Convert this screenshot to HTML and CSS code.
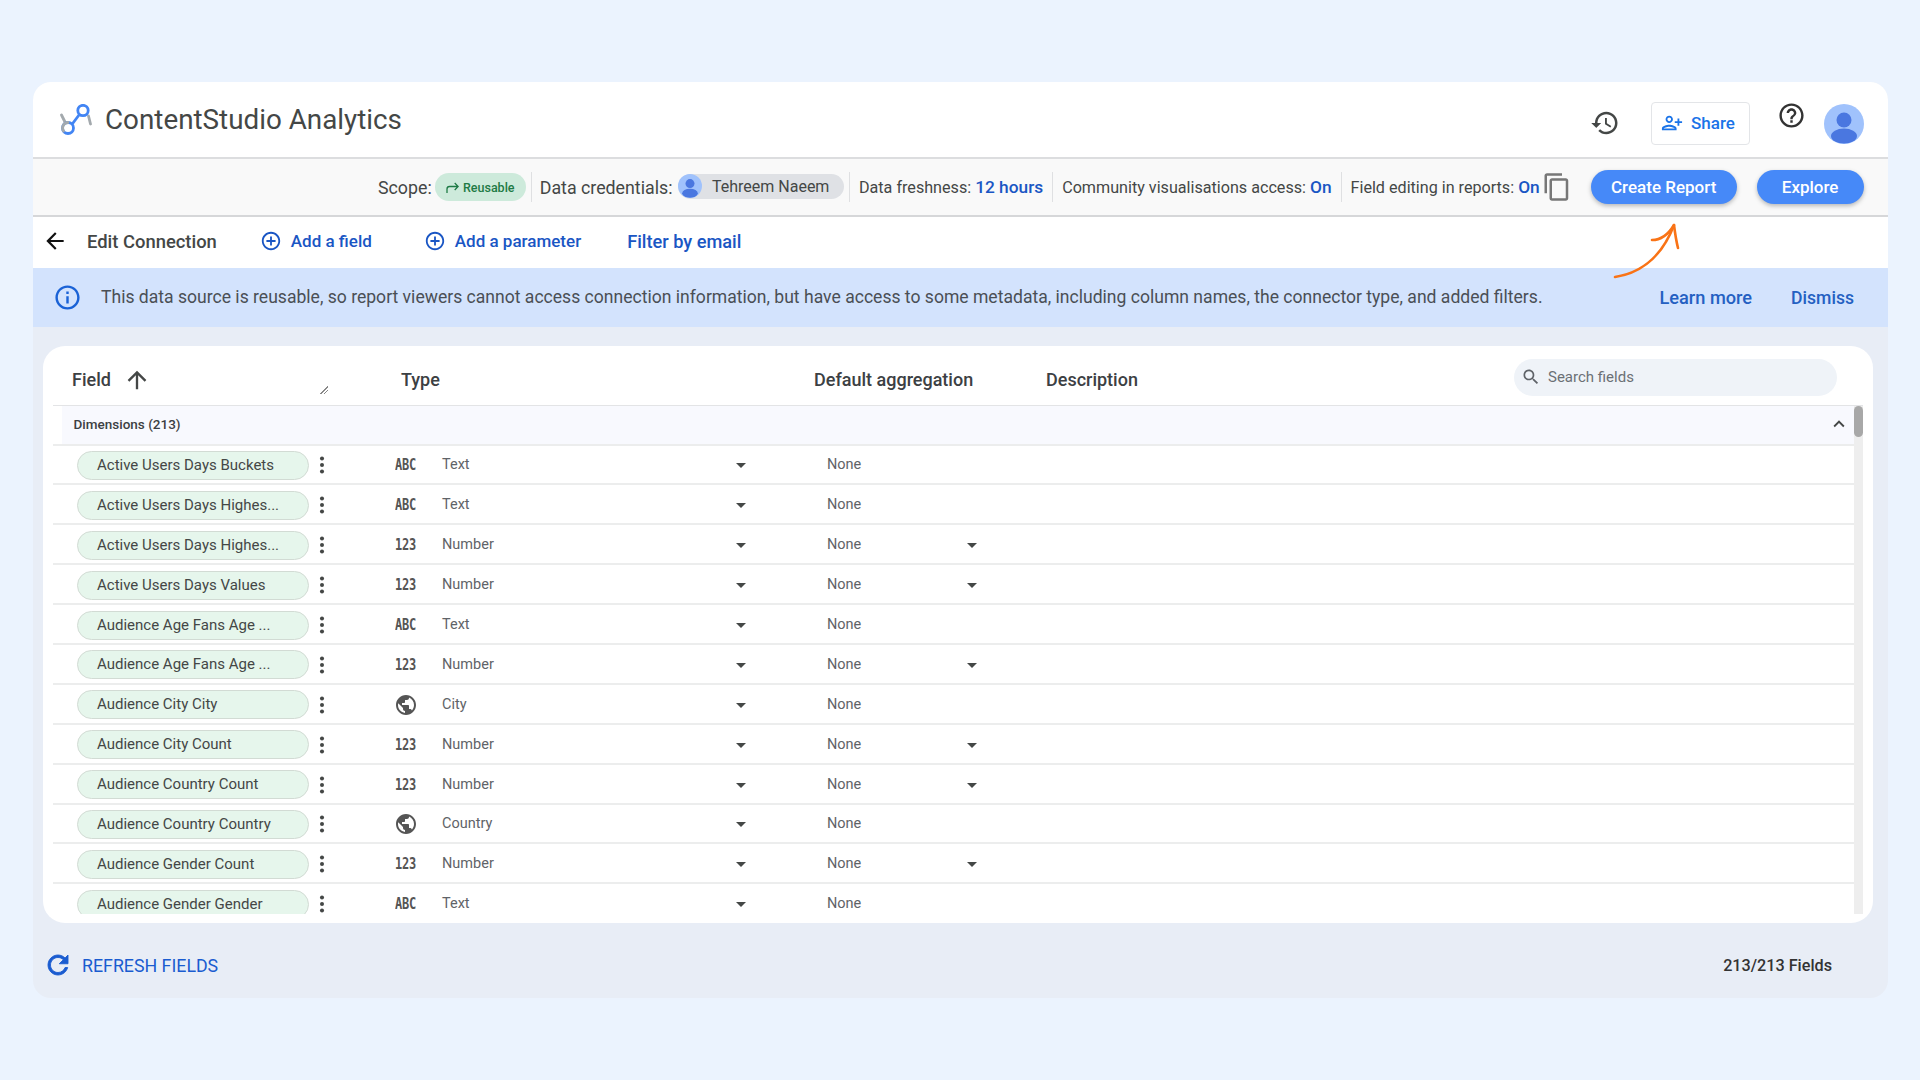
FILE: index.html
```html
<!DOCTYPE html>
<html lang="en">
<head>
  <meta charset="UTF-8">
  <title>ContentStudio Analytics</title>
  <link rel="stylesheet" href="styles.css">
</head>
<body>
  <svg class="sprite" xmlns="http://www.w3.org/2000/svg">
    <symbol id="i-history" viewBox="0 0 24 24"><path d="M13 3c-4.97 0-9 4.03-9 9H1l3.89 3.89.07.14L9 12H6c0-3.87 3.13-7 7-7s7 3.13 7 7-3.13 7-7 7c-1.93 0-3.68-.79-4.94-2.06l-1.42 1.42C8.27 19.99 10.51 21 13 21c4.97 0 9-4.03 9-9s-4.03-9-9-9zm-1 5v5l4.28 2.54.72-1.21-3.5-2.08V8H12z"/></symbol>
    <symbol id="i-help" viewBox="0 0 24 24"><path d="M11 18h2v-2h-2v2zm1-16C6.48 2 2 6.48 2 12s4.48 10 10 10 10-4.48 10-10S17.52 2 12 2zm0 18c-4.41 0-8-3.59-8-8s3.59-8 8-8 8 3.59 8 8-3.59 8-8 8zm0-14c-2.21 0-4 1.79-4 4h2c0-1.1.9-2 2-2s2 .9 2 2c0 2-3 1.75-3 5h2c0-2.25 3-2.5 3-5 0-2.21-1.79-4-4-4z"/></symbol>
    <symbol id="i-share" viewBox="0 0 24 24"><path transform="translate(24 0) scale(-1 1)" d="M15 12c2.21 0 4-1.79 4-4s-1.79-4-4-4-4 1.79-4 4 1.79 4 4 4zm0-6c1.1 0 2 .9 2 2s-.9 2-2 2-2-.9-2-2 .9-2 2-2zm0 8c-2.67 0-8 1.34-8 4v2h16v-2c0-2.66-5.33-4-8-4zm-6 4c.22-.72 3.31-2 6-2 2.7 0 5.8 1.29 6 2H9zm-3-3v-3h3v-2H6V7H4v3H1v2h3v3h2z"/></symbol>
    <symbol id="i-copy" viewBox="0 0 24 24"><path d="M16 1H4c-1.1 0-2 .9-2 2v14h2V3h12V1zm3 4H8c-1.1 0-2 .9-2 2v14c0 1.1.9 2 2 2h11c1.1 0 2-.9 2-2V7c0-1.1-.9-2-2-2zm0 16H8V7h11v14z"/></symbol>
    <symbol id="i-back" viewBox="0 0 24 24"><path d="M20 11H7.83l5.59-5.59L12 4l-8 8 8 8 1.41-1.41L7.83 13H20v-2z"/></symbol>
    <symbol id="i-up" viewBox="0 0 24 24"><path d="M4 12l1.41 1.41L11 7.83V20h2V7.83l5.58 5.59L20 12l-8-8-8 8z"/></symbol>
    <symbol id="i-add" viewBox="0 0 24 24"><path d="M13 7h-2v4H7v2h4v4h2v-4h4v-2h-4V7zm-1-5C6.48 2 2 6.48 2 12s4.48 10 10 10 10-4.48 10-10S17.52 2 12 2zm0 18c-4.41 0-8-3.59-8-8s3.59-8 8-8 8 3.59 8 8-3.59 8-8 8z"/></symbol>
    <symbol id="i-info" viewBox="0 0 24 24"><path d="M11 7h2v2h-2zm0 4h2v6h-2zm1-9C6.48 2 2 6.48 2 12s4.48 10 10 10 10-4.48 10-10S17.52 2 12 2zm0 18c-4.41 0-8-3.59-8-8s3.59-8 8-8 8 3.59 8 8-3.59 8-8 8z"/></symbol>
    <symbol id="i-search" viewBox="0 0 24 24"><path d="M15.5 14h-.79l-.28-.27C15.41 12.59 16 11.11 16 9.5 16 5.91 13.09 3 9.5 3S3 5.91 3 9.5 5.91 16 9.5 16c1.61 0 3.09-.59 4.23-1.57l.27.28v.79l5 4.99L20.49 19l-4.99-5zm-6 0C7.01 14 5 11.99 5 9.5S7.01 5 9.5 5 14 7.01 14 9.5 11.99 14 9.5 14z"/></symbol>
    <symbol id="i-less" viewBox="0 0 24 24"><path d="M12 8l-6 6 1.41 1.41L12 10.83l4.59 4.58L18 14z"/></symbol>
    <symbol id="i-kebab" viewBox="0 0 24 24"><circle cx="12" cy="5" r="2.2"/><circle cx="12" cy="12" r="2.2"/><circle cx="12" cy="19" r="2.2"/></symbol>
    <symbol id="i-drop" viewBox="0 0 24 24"><path d="M7 10l5 5 5-5z"/></symbol>
    <symbol id="i-globe" viewBox="0 0 24 24"><path d="M12 2C6.48 2 2 6.48 2 12s4.48 10 10 10 10-4.48 10-10S17.52 2 12 2zm-1 17.93c-3.95-.49-7-3.85-7-7.93 0-.62.08-1.21.21-1.79L9 15v1c0 1.1.9 2 2 2v1.93zm6.9-2.54c-.26-.81-1-1.39-1.9-1.39h-1v-3c0-.55-.45-1-1-1H8v-2h2c.55 0 1-.45 1-1V7h2c1.1 0 2-.9 2-2v-.41c2.93 1.19 5 4.06 5 7.41 0 2.08-.8 3.97-2.1 5.39z"/></symbol>
    <symbol id="i-refresh" viewBox="0 0 24 24"><path stroke="#1a5cd0" stroke-width="0.7" d="M17.65 6.35C16.2 4.9 14.21 4 12 4c-4.42 0-7.99 3.58-7.99 8s3.57 8 7.99 8c3.73 0 6.84-2.55 7.73-6h-2.08c-.82 2.33-3.04 4-5.65 4-3.31 0-6-2.69-6-6s2.69-6 6-6c1.66 0 3.14.69 4.22 1.78L13 11h7V4l-2.35 2.35z"/></symbol>
    <symbol id="i-person" viewBox="0 0 40 40"><rect width="40" height="40" fill="#a0c2fc"/><circle cx="20" cy="16" r="7.5" fill="#4a77e0"/><ellipse cx="20" cy="32" rx="13" ry="7.5" fill="#4a77e0"/></symbol>
  </svg>

  <div class="app">
    <header class="topbar">
      <svg class="logo" viewBox="0 0 32 32" width="32" height="32" fill="none" stroke-width="2.8" stroke-linecap="round">
        <path d="M1.5 11l3.5 7M28.500 12l2 8" stroke="#a3a9ad"/>
        <circle cx="23" cy="6.5" r="5.2" stroke="#4285f4"/>
        <path d="M19 11l-6 8" stroke="#4285f4"/>
        <circle cx="8" cy="24" r="5.5" stroke="#4285f4"/>
        <path d="M3.5 27a5.5 5.5 0 0 1 4.5-8.500" stroke="#a3a9ad"/>
      </svg>
      <div class="title">ContentStudio Analytics</div>
      <svg class="ico-history"><use href="#i-history"/></svg>
      <button class="share-btn"><svg class="ico-share"><use href="#i-share"/></svg>Share</button>
      <svg class="ico-help"><use href="#i-help"/></svg>
      <svg class="avatar"><use href="#i-person"/></svg>
    </header>

    <div class="toolbar">
      <span class="label-lg">Scope:</span>
      <span class="scope-pill">
        <svg class="ico-reuse" viewBox="0 0 13 11" width="13" height="11" fill="none" stroke="#1e7a45" stroke-width="1.3"><path d="M1 11V7c0-1.500 1-2.500 2.500-2.500H12M8.700 1l3.500 3.500L8.700 8"/></svg>
        Reusable
      </span>
      <span class="divider d-first"></span>
      <span class="label-lg">Data credentials:</span>
      <span class="cred-chip"><svg class="cred-avatar"><use href="#i-person"/></svg>Tehreem Naeem</span>
      <span class="divider d-tight"></span>
      <span class="label">Data freshness: <b>12 hours</b></span>
      <span class="divider"></span>
      <span class="label">Community visualisations access: <b>On</b></span>
      <span class="divider"></span>
      <span class="label">Field editing in reports: <b>On</b></span>
      <svg class="ico-copy"><use href="#i-copy"/></svg>
      <button class="primary create">Create Report</button>
      <button class="primary explore">Explore</button>
    </div>

    <nav class="navrow">
      <svg class="ico-back"><use href="#i-back"/></svg>
      <span class="edit">Edit Connection</span>
      <a class="link add-field"><svg class="ico-add"><use href="#i-add"/></svg>Add a field</a>
      <a class="link add-param"><svg class="ico-add"><use href="#i-add"/></svg>Add a parameter</a>
      <a class="link filter">Filter by email</a>
    </nav>

    <div class="banner">
      <svg class="ico-info"><use href="#i-info"/></svg>
      <p class="banner-text">This data source is reusable, so report viewers cannot access connection information, but have access to some metadata, including column names, the connector type, and added filters.</p>
      <a class="banner-link learn">Learn more</a>
      <a class="banner-link dismiss">Dismiss</a>
    </div>

    <svg class="callout" viewBox="0 0 72 60" width="72" height="60" fill="none" stroke="#f97316" stroke-width="2.600" stroke-linecap="round" stroke-linejoin="round">
      <path d="M5 57C25 54 50 42 64 5"/>
      <path d="M42 20C50 20 58 15 64 5C65 13 66 20 68 28"/>
    </svg>

    <main class="card">
      <div class="cols">
        <div class="col-field">Field <svg class="ico-up"><use href="#i-up"/></svg><span class="resize"></span></div>
        <div>Type</div>
        <div>Default aggregation</div>
        <div>Description</div>
        <div class="search"><svg class="ico-search"><use href="#i-search"/></svg>Search fields</div>
      </div>

      <div class="table">
        <div class="rows">
          <div class="group"><div class="group-in">Dimensions (213)<svg class="ico-less"><use href="#i-less"/></svg></div></div>

          <div class="row"><span class="cell-pill"><span class="pill">Active Users Days Buckets</span></span><svg class="kebab"><use href="#i-kebab"/></svg><span class="kind"><i class="abc">ABC</i></span><span class="val">Text</span><svg class="drop"><use href="#i-drop"/></svg><span class="val agg">None</span></div>
          <div class="row"><span class="cell-pill"><span class="pill">Active Users Days Highes...</span></span><svg class="kebab"><use href="#i-kebab"/></svg><span class="kind"><i class="abc">ABC</i></span><span class="val">Text</span><svg class="drop"><use href="#i-drop"/></svg><span class="val agg">None</span></div>
          <div class="row"><span class="cell-pill"><span class="pill">Active Users Days Highes...</span></span><svg class="kebab"><use href="#i-kebab"/></svg><span class="kind"><i class="abc">123</i></span><span class="val">Number</span><svg class="drop"><use href="#i-drop"/></svg><span class="val agg">None</span><svg class="drop"><use href="#i-drop"/></svg></div>
          <div class="row"><span class="cell-pill"><span class="pill">Active Users Days Values</span></span><svg class="kebab"><use href="#i-kebab"/></svg><span class="kind"><i class="abc">123</i></span><span class="val">Number</span><svg class="drop"><use href="#i-drop"/></svg><span class="val agg">None</span><svg class="drop"><use href="#i-drop"/></svg></div>
          <div class="row"><span class="cell-pill"><span class="pill">Audience Age Fans Age ...</span></span><svg class="kebab"><use href="#i-kebab"/></svg><span class="kind"><i class="abc">ABC</i></span><span class="val">Text</span><svg class="drop"><use href="#i-drop"/></svg><span class="val agg">None</span></div>
          <div class="row"><span class="cell-pill"><span class="pill">Audience Age Fans Age ...</span></span><svg class="kebab"><use href="#i-kebab"/></svg><span class="kind"><i class="abc">123</i></span><span class="val">Number</span><svg class="drop"><use href="#i-drop"/></svg><span class="val agg">None</span><svg class="drop"><use href="#i-drop"/></svg></div>
          <div class="row"><span class="cell-pill"><span class="pill">Audience City City</span></span><svg class="kebab"><use href="#i-kebab"/></svg><span class="kind"><svg class="globe"><use href="#i-globe"/></svg></span><span class="val">City</span><svg class="drop"><use href="#i-drop"/></svg><span class="val agg">None</span></div>
          <div class="row"><span class="cell-pill"><span class="pill">Audience City Count</span></span><svg class="kebab"><use href="#i-kebab"/></svg><span class="kind"><i class="abc">123</i></span><span class="val">Number</span><svg class="drop"><use href="#i-drop"/></svg><span class="val agg">None</span><svg class="drop"><use href="#i-drop"/></svg></div>
          <div class="row"><span class="cell-pill"><span class="pill">Audience Country Count</span></span><svg class="kebab"><use href="#i-kebab"/></svg><span class="kind"><i class="abc">123</i></span><span class="val">Number</span><svg class="drop"><use href="#i-drop"/></svg><span class="val agg">None</span><svg class="drop"><use href="#i-drop"/></svg></div>
          <div class="row"><span class="cell-pill"><span class="pill">Audience Country Country</span></span><svg class="kebab"><use href="#i-kebab"/></svg><span class="kind"><svg class="globe"><use href="#i-globe"/></svg></span><span class="val">Country</span><svg class="drop"><use href="#i-drop"/></svg><span class="val agg">None</span></div>
          <div class="row"><span class="cell-pill"><span class="pill">Audience Gender Count</span></span><svg class="kebab"><use href="#i-kebab"/></svg><span class="kind"><i class="abc">123</i></span><span class="val">Number</span><svg class="drop"><use href="#i-drop"/></svg><span class="val agg">None</span><svg class="drop"><use href="#i-drop"/></svg></div>
          <div class="row"><span class="cell-pill"><span class="pill">Audience Gender Gender</span></span><svg class="kebab"><use href="#i-kebab"/></svg><span class="kind"><i class="abc">ABC</i></span><span class="val">Text</span><svg class="drop"><use href="#i-drop"/></svg><span class="val agg">None</span></div>
        </div>
        <div class="scrollbar"><div class="thumb"></div></div>
      </div>
    </main>

    <footer class="foot">
      <a class="refresh"><svg class="ico-refresh"><use href="#i-refresh"/></svg>REFRESH FIELDS</a>
      <span class="count">213/213 Fields</span>
    </footer>
  </div>
</body>
</html>
```

FILE: styles.css
```css
* {
  box-sizing: border-box;
}

body {
  margin: 0;
  height: 1080px;
  overflow: hidden;
  padding: 82px 32px 0 33px;
  background: #ebf3fe;
  font-family: Roboto, sans-serif;
  color: #444746;
}

.sprite {
  display: none;
}

.app {
  position: relative;
  height: 916px;
  background: #e8edf6;
  border-radius: 18px;
  overflow: hidden;
}

/* top bar */
.topbar {
  display: flex;
  align-items: center;
  height: 77px;
  background: #fff;
  border-bottom: 2px solid #dcdddf;
}

.logo {
  margin-left: 27px;
}

.title {
  margin-left: 13px;
  font-size: 27.8px;
  color: #444746;
}

.ico-history {
  width: 30px;
  height: 30px;
  margin: 7px 0 0 auto;
  fill: #444746;
}

.share-btn {
  display: flex;
  align-items: center;
  width: 99px;
  height: 43px;
  margin: 7px 0 0 31px;
  padding: 0 0 0 9px;
  background: #fff;
  border: 1px solid #e3e5e8;
  border-radius: 4px;
  color: #1a73e8;
  font: 500 17px Roboto, sans-serif;
}

.ico-share {
  width: 22px;
  height: 22px;
  margin-right: 8px;
  fill: #1a73e8;
}

.ico-help {
  width: 29px;
  height: 29px;
  margin: -9px 0 0 27px;
  fill: #333;
}

.avatar {
  width: 40px;
  height: 40px;
  margin: 8px 24px 0 18px;
  border-radius: 50%;
}

/* scope bar */
.toolbar {
  display: flex;
  align-items: center;
  height: 58px;
  padding-left: 345px;
  background: #f9f9f9;
  border-bottom: 2px solid #d6d7d9;
  white-space: nowrap;
}

.label-lg {
  font-size: 17.8px;
}

.label {
  font-size: 16.15px;
}

.label b {
  color: #1a56c4;
  font-weight: 500;
  font-size: 17.3px;
}

.scope-pill {
  display: flex;
  align-items: center;
  justify-content: center;
  gap: 4px;
  width: 91px;
  height: 28px;
  margin-left: 3px;
  background: #cdeadb;
  border-radius: 14px;
  color: #1e7a45;
  font-size: 12.5px;
  font-weight: 500;
}

.divider {
  width: 1px;
  height: 30px;
  margin: 0 9px;
  background: #dfe0e2;
}

.d-first {
  margin: 0 8px 0 5px;
}

.d-tight {
  margin-left: 5px;
}

.cred-chip {
  display: flex;
  align-items: center;
  width: 166px;
  height: 25px;
  margin: -2px 0 0 5.5px;
  background: #dfe1e5;
  border-radius: 13px;
  font-size: 16px;
}

.cred-avatar {
  width: 24px;
  height: 24px;
  margin-right: 10px;
  border-radius: 50%;
}

.ico-copy {
  width: 30px;
  height: 30px;
  margin-left: 2px;
  fill: #777;
}

.primary {
  height: 34px;
  background: #4689f8;
  border: none;
  border-radius: 17px;
  box-shadow: 0 2px 4px rgba(60, 64, 67, 0.35);
  color: #fff;
  font: 500 17px Roboto, sans-serif;
}

.create {
  width: 146px;
  margin-left: 19px;
}

.explore {
  width: 107px;
  margin-left: 20px;
}

/* edit row */
.navrow {
  display: flex;
  align-items: center;
  height: 51px;
  padding-bottom: 3px;
  background: #fff;
  font-size: 17px;
  font-weight: 500;
}

.ico-back {
  width: 26px;
  height: 26px;
  margin-left: 9px;
  fill: #111;
}

.edit {
  margin-left: 19px;
  font-size: 18.4px;
  color: #444746;
}

.link {
  display: flex;
  align-items: center;
  color: #1a56c4;
}

.add-field {
  margin-left: 43px;
}

.add-param {
  margin-left: 52px;
}

.filter {
  margin-left: 46px;
  font-size: 18.2px;
}

.ico-add {
  width: 22px;
  height: 22px;
  margin-right: 9px;
  fill: #1a56c4;
}

/* notice */
.banner {
  display: flex;
  align-items: center;
  height: 59px;
  padding-left: 20px;
  background: #d3e3fd;
}

.ico-info {
  width: 29px;
  height: 29px;
  fill: #1a62d6;
}

.banner-text {
  margin: -2px 0 0 19px;
  font-size: 17.57px;
  color: #4a4f55;
}

.banner-link {
  color: #2460c2;
  font-weight: 500;
}

.learn {
  margin-left: auto;
  font-size: 18.2px;
}

.dismiss {
  margin: 0 34px 0 39px;
  font-size: 17.6px;
}

/* hand drawn arrow over the page */
.callout {
  position: absolute;
  left: 1577px;
  top: 138px;
}

/* field table */
.card {
  margin: 19px 15px 0 10px;
  height: 577px;
  padding: 0 10px;
  background: #fff;
  border-radius: 22px;
}

.cols {
  display: grid;
  grid-template-columns: 348px 413px 232px 468px 323px;
  align-items: center;
  height: 59px;
  padding-top: 8px;
  font-size: 18px;
  font-weight: 500;
  color: #3c4043;
}

.col-field {
  position: relative;
  display: flex;
  align-items: center;
  padding-left: 19px;
}

.ico-up {
  width: 28px;
  height: 28px;
  margin-left: 12px;
  fill: #444746;
}

.resize {
  position: absolute;
  left: 267px;
  top: 20px;
  width: 8px;
  height: 8px;
  background: linear-gradient(135deg, transparent 48%, #888 48%, #888 58%, transparent 58%, transparent 70%, #888 70%, #888 80%, transparent 80%);
  transform: scaleX(-1) rotate(90deg);
}

.search {
  display: flex;
  align-items: center;
  height: 37px;
  margin-top: -5px;
  padding-left: 7px;
  background: #eff3f8;
  border-radius: 19px;
  color: #6b7075;
  font-size: 15px;
  font-weight: 400;
}

.ico-search {
  width: 20px;
  height: 20px;
  margin-right: 7px;
  fill: #5f6368;
}

.table {
  display: flex;
  height: 509px;
  border-top: 1px solid #e3e4e6;
}

.rows {
  flex: 1;
  overflow: hidden;
}

.group {
  height: 39.5px;
  border-bottom: 2px solid #eceded;
}

.group-in {
  display: flex;
  align-items: center;
  justify-content: space-between;
  height: 100%;
  margin-left: 9px;
  padding: 0 4px 2px 11.5px;
  background: #f8f9fe;
  font-size: 13.5px;
  font-weight: 500;
  color: #3c4043;
}

.ico-less {
  width: 22px;
  height: 22px;
  fill: #444746;
}

.row {
  display: grid;
  grid-template-columns: 256px 26px 107px 287px 24px 207px 24px;
  align-items: center;
  height: 39.9px;
  padding-top: 2px;
  border-bottom: 2px solid #eceded;
  font-size: 14.5px;
  color: #5f6368;
}

.val {
  margin-top: -1px;
}

.cell-pill {
  padding-left: 24px;
}

.pill {
  display: block;
  height: 29px;
  padding-left: 19px;
  background: #e6f6ec;
  border: 1.5px solid #d2dbd4;
  border-radius: 15px;
  color: #444746;
  font-size: 15px;
  line-height: 27px;
  white-space: nowrap;
}

.kebab {
  width: 22px;
  height: 22px;
  margin-left: 2px;
  fill: #444746;
}

.kind {
  display: flex;
  align-items: center;
  padding-left: 60px;
}

.abc {
  font-family: "DejaVu Sans Mono", monospace;
  font-size: 12px;
  font-style: normal;
  font-weight: 700;
  letter-spacing: -0.2px;
  color: #555;
  transform: scaleY(1.25);
}

.globe {
  width: 24px;
  height: 24px;
  margin-left: -1px;
  fill: #555;
}

.drop {
  width: 24px;
  height: 24px;
  fill: #444746;
}

.agg {
  padding-left: 74px;
}

.scrollbar {
  width: 9px;
  background: #eee;
}

.thumb {
  height: 31px;
  background: #a8a8a8;
  border-radius: 5px;
}

/* bottom strip */
.foot {
  display: flex;
  align-items: center;
  justify-content: space-between;
  height: 75px;
  padding: 9px 56px 0 10px;
}

.refresh {
  display: flex;
  align-items: center;
  color: #1a5cd0;
  font-size: 17.8px;
}

.ico-refresh {
  width: 30px;
  height: 30px;
  margin-right: 9px;
  fill: #1a5cd0;
}

.count {
  color: #333;
  font-size: 16.2px;
  font-weight: 500;
}
```
